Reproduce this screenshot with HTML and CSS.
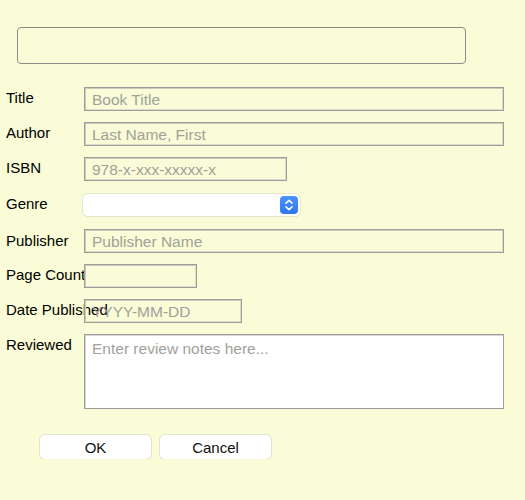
FILE: index.html
```html
<!DOCTYPE html>
<html lang="en">
<head>
<meta charset="utf-8">
<title>Book Entry</title>
<link rel="stylesheet" href="styles.css">
</head>
<body>
<div class="banner"></div>

<form class="book-form">
  <label class="lbl" for="title">Title</label>
  <input class="field wide" id="title" type="text" placeholder="Book Title">

  <label class="lbl" for="author">Author</label>
  <input class="field wide" id="author" type="text" placeholder="Last Name, First">

  <label class="lbl" for="isbn">ISBN</label>
  <input class="field isbn" id="isbn" type="text" placeholder="978-x-xxx-xxxxx-x">

  <label class="lbl lbl-genre" for="genre">Genre</label>
  <div class="select-wrap">
    <select class="genre" id="genre">
      <option></option>
    </select>
    <span class="stepper">
      <svg width="18" height="18" viewBox="0 0 18 18">
        <path d="M6 7.2 L9 4.4 L12 7.2" fill="none" stroke="#fff" stroke-width="1.6" stroke-linecap="round" stroke-linejoin="round"/>
        <path d="M6 10.8 L9 13.6 L12 10.8" fill="none" stroke="#fff" stroke-width="1.6" stroke-linecap="round" stroke-linejoin="round"/>
      </svg>
    </span>
  </div>

  <label class="lbl lbl-pub" for="publisher">Publisher</label>
  <input class="field wide pub" id="publisher" type="text" placeholder="Publisher Name">

  <label class="lbl" for="pages">Page Count</label>
  <input class="field pages" id="pages" type="text">

  <label class="lbl" for="published">Date Published</label>
  <input class="field date" id="published" type="text" placeholder="YYYY-MM-DD">

  <label class="lbl" for="review">Reviewed</label>
  <textarea class="field notes" id="review" placeholder="Enter review notes here..."></textarea>
</form>

<div class="buttons">
  <button type="button" class="btn">OK</button>
  <button type="button" class="btn">Cancel</button>
</div>
</body>
</html>
```

FILE: styles.css
```css
body{margin:0;padding:27px 0 0 0;background-color:#f9fcd6;font-family:"Liberation Sans",Arial,sans-serif;font-size:15px;color:#000;}
.banner{margin-left:17px;width:447px;height:35px;border:1px solid #8c8c8a;border-radius:4px;}

.book-form{display:grid;grid-template-columns:78px 1fr;row-gap:11px;align-items:start;margin-top:23px;padding-left:6px;}
.lbl{white-space:nowrap;padding-top:2px;line-height:18px;}
.lbl-genre{padding-top:3px;}
.lbl-pub,.pub{margin-top:1px;margin-bottom:-1px;}

.field{box-sizing:border-box;height:24px;margin:0;padding:1px 6px 0 7px;font-family:"Liberation Sans",Arial,sans-serif;font-size:15.5px;background:transparent;border:1px solid #9d9d9b;box-shadow:inset 1px 1px 0 #c9cbbb,inset -1px -1px 0 #dcdecb;outline:none;}
.field::placeholder{color:#a1a19c;}
.wide{width:420px;}
.isbn{width:203px;}
.pages{width:113px;}
.date{width:158px;}
.notes{display:block;width:420px;height:75px;padding-top:5px;resize:none;background:#fff;box-shadow:inset 1px 1px 0 #d6d6d6;}

.select-wrap{position:relative;width:217px;height:22px;margin-left:-1px;margin-top:2px;margin-bottom:2px;}
.genre{appearance:none;-webkit-appearance:none;box-sizing:border-box;width:100%;height:22px;margin:0;background:#fff;border:none;border-radius:5px;box-shadow:0 0 0 1px #e4e6d0,0 1px 1px #d9dbc4;font-family:"Liberation Sans",Arial,sans-serif;font-size:15px;}
.stepper{position:absolute;right:2px;top:2px;width:18px;height:18px;border-radius:4px;background:linear-gradient(#4c93fb,#2f74ee);}
.stepper svg{display:block;}

.buttons{display:flex;gap:9px;margin:26px 0 0 40px;}
.btn{box-sizing:border-box;width:111px;height:24px;padding:0;background:#fff;border:none;border-radius:5px;box-shadow:0 0 0 1px #e2e4cf,0 1px 1px #cfd1bb;font-family:"Liberation Sans",Arial,sans-serif;font-size:15px;color:#111;}
```
